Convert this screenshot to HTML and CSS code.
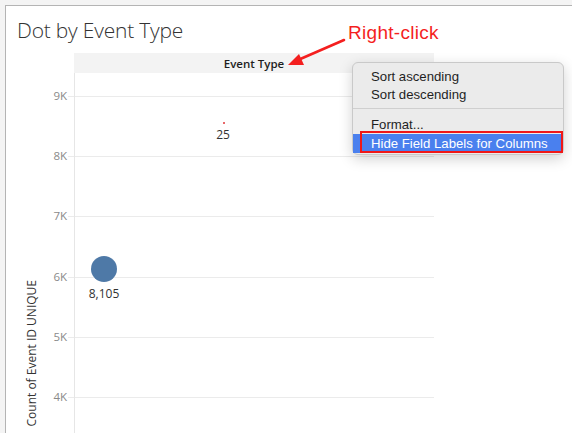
FILE: index.html
```html
<!DOCTYPE html>
<html>
<head>
<meta charset="utf-8">
<link rel="stylesheet" href="styles.css">
</head>
<body>
<div class="frame">
  <h1 class="title">Dot by Event Type</h1>
  <div class="chart">
    <div class="ytitle"><span>Count of Event ID UNIQUE</span></div>
    <div class="axis">
      <div class="axis-head"></div>
      <div class="ticks">
        <div class="tick"><span>9K</span><i></i></div>
        <div class="tick"><span>8K</span><i></i></div>
        <div class="tick"><span>7K</span><i></i></div>
        <div class="tick"><span>6K</span><i></i></div>
        <div class="tick"><span>5K</span><i></i></div>
        <div class="tick"><span>4K</span><i></i></div>
      </div>
    </div>
    <div class="pane">
      <div class="header">Event Type</div>
      <div class="plot">
        <div class="grid"></div>
        <div class="grid"></div>
        <div class="grid"></div>
        <div class="grid"></div>
        <div class="grid"></div>
        <div class="grid"></div>
        <div class="dot big" style="left:16px; top:183px;"></div>
        <div class="mlabel" style="left:29px; top:220px;">8,105</div>
        <div class="dot small" style="left:148px; top:49px;"></div>
        <div class="mlabel" style="left:148px; top:61px;">25</div>
      </div>
    </div>
  </div>
</div>

<div class="callout">Right-click</div>
<svg class="arrow" width="572" height="433" viewBox="0 0 572 433">
  <line x1="344" y1="40" x2="298" y2="60" stroke="#f41f1f" stroke-width="2.6" stroke-linecap="round"/>
  <polygon points="288,65 299,54 304,65" fill="#f41f1f"/>
</svg>

<div class="menu">
  <div class="item">Sort ascending</div>
  <div class="item">Sort descending</div>
  <div class="sep"></div>
  <div class="item">Format...</div>
  <div class="item active">Hide Field Labels for Columns</div>
</div>
<div class="redbox"></div>
</body>
</html>
```
FILE: styles.css
```css
html, body {
  margin: 0;
  padding: 0;
}
body {
  background: #f4f4f4;
  width: 572px;
  height: 433px;
  overflow: hidden;
  position: relative;
  font-family: "Open Sans", "Liberation Sans", sans-serif;
}
.frame {
  margin: 5px 0 0 5px;
  border-top: 1px solid #b4b4b4;
  border-left: 1px solid #b4b4b4;
  background: #ffffff;
  height: 427px;
  overflow: hidden;
}
.title {
  margin: 0;
  padding: 10px 0 0 11px;
  font-size: 21px;
  line-height: 28px;
  font-weight: 300;
  color: #333333;
  letter-spacing: -0.2px;
}
.chart {
  display: flex;
  margin-top: 9px;
}
.ytitle {
  width: 50px;
  height: 380px;
  display: flex;
  justify-content: center;
  align-items: flex-end;
}
.ytitle span {
  writing-mode: vertical-rl;
  transform: rotate(180deg);
  font-size: 12px;
  color: #333333;
  margin-bottom: 7px;
  white-space: nowrap;
}
.axis {
  width: 18px;
}
.axis-head {
  height: 20px;
}
.ticks {
  padding-top: 23px;
}
.tick {
  height: 60.2px;
  display: flex;
  align-items: flex-start;
}
.tick span {
  width: 11px;
  margin-top: -8px;
  line-height: 16px;
  font-size: 11.5px;
  color: #8a8a8a;
  white-space: nowrap;
  display: flex;
  justify-content: flex-end;
}
.tick i {
  flex: 1;
  margin-left: 1px;
  border-top: 1px solid #ebebeb;
}
.pane {
  width: 360px;
}
.header {
  height: 20px;
  background: #f3f3f3;
  text-align: center;
  font-size: 11.5px;
  font-weight: 600;
  line-height: 22px;
  color: #1e1e1e;
}
.plot {
  position: relative;
  border-left: 1px solid #e6e6e6;
  height: 360px;
  padding-top: 23px;
  box-sizing: border-box;
}
.grid {
  height: 60.2px;
  border-top: 1px solid #ebebeb;
  box-sizing: border-box;
}
.dot {
  position: absolute;
  border-radius: 50%;
}
.dot.big {
  width: 26px;
  height: 26px;
  background: #4e79a7;
}
.dot.small {
  width: 2px;
  height: 2px;
  border-radius: 0;
  background: #e8686a;
}
.mlabel {
  position: absolute;
  transform: translate(-50%, -50%);
  font-size: 12px;
  color: #333333;
  white-space: nowrap;
}
.callout {
  position: absolute;
  left: 348px;
  top: 21px;
  font-family: "Liberation Sans", Arial, sans-serif;
  font-size: 19px;
  letter-spacing: 0.3px;
  color: #f41f1f;
  line-height: 24px;
}
.arrow {
  position: absolute;
  left: 0;
  top: 0;
}
.menu {
  position: absolute;
  left: 352px;
  top: 62px;
  width: 212px;
  box-sizing: border-box;
  padding: 5px 0 1px;
  background: #ebebeb;
  border: 1px solid #c9c9c9;
  border-radius: 6px;
  box-shadow: 0 4px 14px rgba(0, 0, 0, 0.18);
  font-family: "Liberation Sans", Arial, sans-serif;
  font-size: 13.2px;
  color: #1f1f1f;
}
.item {
  height: 18px;
  line-height: 18px;
  padding-left: 18px;
  white-space: nowrap;
}
.item.active {
  background: #4a80ee;
  color: #ffffff;
  height: 19px;
  line-height: 19px;
}
.sep {
  height: 1px;
  background: #cfcfcf;
  margin: 4px 0 7px;
}
.redbox {
  position: absolute;
  left: 360px;
  top: 131px;
  width: 203px;
  height: 22px;
  box-sizing: border-box;
  border: 2px solid #f01818;
}
```
